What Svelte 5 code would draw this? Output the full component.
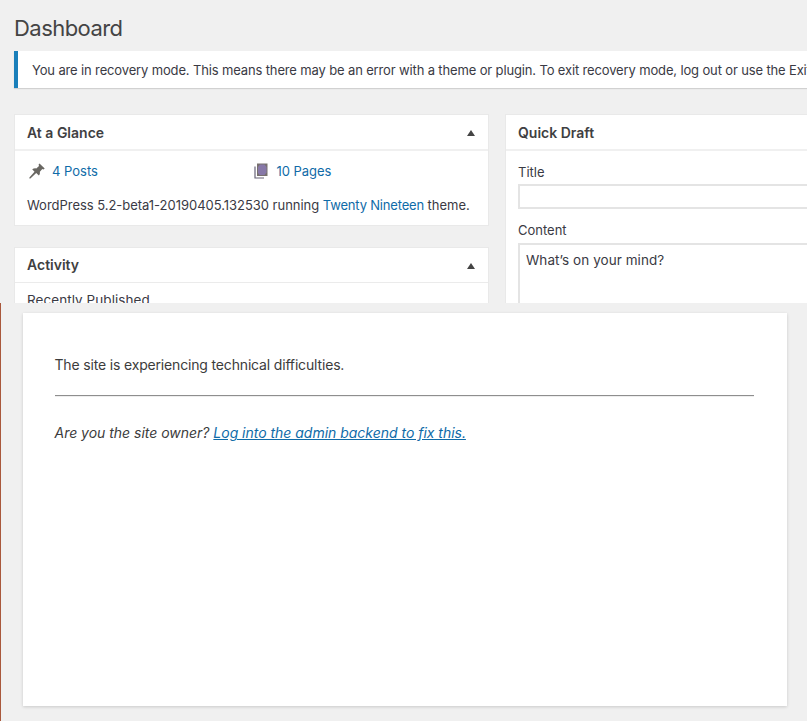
<script>
  const recovery =
    'You are in recovery mode. This means there may be an error with a theme or plugin. To exit recovery mode, log out or use the Exit';
</script>

<div class="page">
  <section class="dashboard">
    <h1>Dashboard</h1>
    <div class="notice"><p>{recovery}</p></div>

    <div class="columns">
      <div class="column">
        <div class="box glance">
          <h2><span>At a Glance</span><i class="toggle"></i></h2>
          <div class="counts">
            <a class="count" href="#posts">
              <svg width="16" height="16" viewBox="0 0 16 16">
                <path
                  d="M10.5 0.4 L15.7 5.4 L14.5 6.4 L13.3 6.1 L10.9 8.7 Q11.3 11 9.9 12.6 L7.2 10 L1.4 15.6 L0.4 15.5 L0.4 14.6 L5.5 8.7 L3.2 6.2 Q5.3 5 7.3 5.4 L10 3 L9.6 1.6 Z"
                  fill="#696762"
                />
              </svg>
              <span>4 Posts</span>
            </a>
            <a class="count pages" href="#pages">
              <svg width="14" height="16" viewBox="0 0 14 16">
                <path d="M1 3.5v11.5h9" fill="none" stroke="#686477" stroke-width="1.2" />
                <path d="M3 .5h10.5v12.5H3z" fill="#77706f" />
                <path d="M6 1.5h4.5l2 2.5v5.5l-2 2.5H5.5l-1.5-2V4z" fill="#8778a8" />
              </svg>
              <span>10 Pages</span>
            </a>
          </div>
          <p class="version">
            WordPress 5.2-beta1-20190405.132530 running <a href="#theme">Twenty Nineteen</a> theme.
          </p>
        </div>
        <div class="box activity">
          <h2><span>Activity</span><i class="toggle"></i></h2>
          <h3>Recently Published</h3>
        </div>
      </div>

      <div class="box draft">
        <h2><span>Quick Draft</span></h2>
        <div class="fields">
          <div class="label">Title</div>
          <div class="input"></div>
          <div class="label content">Content</div>
          <div class="textarea">What’s on your mind?</div>
        </div>
      </div>
    </div>
  </section>

  <section class="error">
    <div class="card">
      <p>The site is experiencing technical difficulties.</p>
      <hr />
      <p class="owner">
        <em>Are you the site owner? <a href="#login">Log into the admin backend to fix this.</a></em>
      </p>
    </div>
  </section>
</div>

<style>
  .page {
    width: 807px;
    height: 721px;
    overflow: hidden;
    background: #f0f0f0;
    color: #3c3c3c;
    font: 13px/20px Inter, 'Liberation Sans', sans-serif;
  }
  h1, h2, h3, p {
    margin: 0;
  }
  a {
    color: #0f6ba8;
    text-decoration: none;
  }
  .dashboard {
    height: 303px;
    overflow: hidden;
    padding: 12px 0 0 14px;
    box-sizing: border-box;
    color: #3a3a44;
  }
  h1 {
    height: 39px;
    font-size: 22px;
    line-height: 32px;
    font-weight: 400;
    letter-spacing: -0.55px;
    color: #444;
  }
  .notice {
    height: 37px;
    border-left: 4px solid #1a7fba;
    padding-left: 14px;
    background: #fff;
    box-shadow: 0 1px 1px rgba(0, 0, 0, 0.13);
    white-space: nowrap;
    overflow: hidden;
  }
  .notice p {
    line-height: 38px;
    letter-spacing: -0.143px;
  }
  .columns {
    display: flex;
    gap: 16px;
    padding-top: 26px;
  }
  .column {
    width: 475px;
    flex: none;
  }
  .box {
    box-sizing: border-box;
    border: 1px solid #e9e9e9;
    background: #fff;
  }
  h2 {
    display: flex;
    justify-content: space-between;
    align-items: center;
    box-sizing: border-box;
    height: 36px;
    padding: 1px 13px 0 12px;
    border-bottom: 2px solid #f0f0f0;
    font-size: 14px;
    font-weight: 600;
    letter-spacing: 0;
    color: #3f3f42;
  }
  .toggle {
    border: solid transparent;
    border-width: 0 4px 6px;
    border-bottom-color: #444;
    margin-top: 1px;
  }
  .glance {
    height: 112px;
    margin-bottom: 21px;
  }
  .counts {
    display: flex;
    padding: 10px 0 0 14px;
  }
  .count {
    display: flex;
    align-items: center;
    gap: 7px;
    width: 225px;
    height: 20px;
  }
  .count.pages {
    gap: 8.5px;
    letter-spacing: -0.05px;
  }
  .version {
    padding: 14px 0 0 12px;
    letter-spacing: -0.03px;
    white-space: nowrap;
  }
  .version a {
    letter-spacing: -0.18px;
  }
  .activity {
    height: 90px;
  }
  .activity h2 {
    height: 35px;
    padding-top: 0;
    border-bottom: 1px solid #ebebeb;
  }
  h3 {
    padding: 7px 0 0 12px;
    font-size: 13.5px;
    font-weight: 400;
    letter-spacing: 0.06px;
  }
  .draft {
    width: 420px;
    height: 220px;
    flex: none;
  }
  .fields {
    padding: 11px 12px 0;
  }
  .input {
    height: 21px;
    margin-top: 2px;
    border: 2px solid #e4e4e4;
  }
  .content {
    margin-top: 11px;
  }
  .textarea {
    height: 100px;
    margin-top: 3px;
    border: 2px solid #e4e4e4;
    padding: 5px 6px;
    font-size: 13.5px;
    letter-spacing: 0.06px;
  }
  .error {
    height: 418px;
    box-sizing: border-box;
    border-left: 1px solid #a9583c;
    padding: 10px 0 0 22px;
  }
  .card {
    width: 764px;
    height: 393px;
    box-sizing: border-box;
    padding: 41px 33px 0 31.5px;
    background: #fff;
    box-shadow: 0 1px 3px rgba(0, 0, 0, 0.16);
    font-size: 14px;
    line-height: 21px;
    letter-spacing: -0.165px;
  }
  hr {
    height: 1px;
    margin: 20px 0 25px;
    border: 0;
    border-top: 1px solid #8e8e8e;
    background: #eee;
  }
  .owner {
    letter-spacing: -0.02px;
  }
  .card a {
    text-decoration: underline;
  }
</style>
